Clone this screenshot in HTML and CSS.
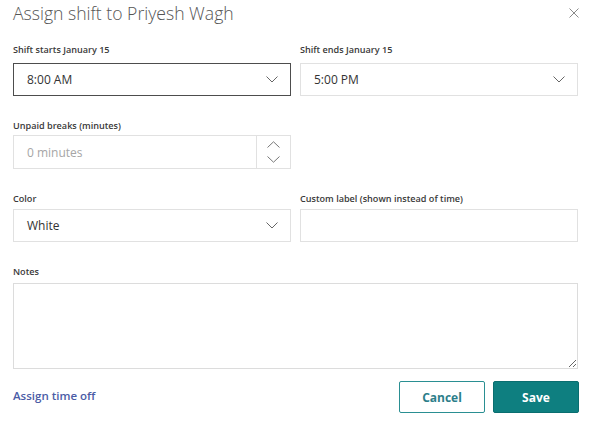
FILE: index.html
```html
<!DOCTYPE html>
<html>
<head>
<meta charset="utf-8">
<link rel="stylesheet" href="styles.css">
</head>
<body>
<div class="dialog">
  <div class="header">
    <h1 class="title">Assign shift to Priyesh Wagh</h1>
    <svg class="close" width="10" height="10" viewBox="0 0 10 10"><path d="M0.5 0.5L9.5 9.5M9.5 0.5L0.5 9.5" stroke="#8a8a8a" stroke-width="1" fill="none"/></svg>
  </div>
  <div class="grid">
    <div class="field">
      <div class="label first">Shift starts January 15</div>
      <div class="box focused"><span class="value">8:00 AM</span><svg class="chev" width="12" height="7" viewBox="0 0 12 7"><path d="M0.5 0.5L6 6L11.5 0.5" stroke="#666" fill="none"/></svg></div>
    </div>
    <div class="field">
      <div class="label first">Shift ends January 15</div>
      <div class="box"><span class="value">5:00 PM</span><svg class="chev" width="12" height="7" viewBox="0 0 12 7"><path d="M0.5 0.5L6 6L11.5 0.5" stroke="#666" fill="none"/></svg></div>
    </div>
    <div class="field">
      <div class="label second">Unpaid breaks (minutes)</div>
      <div class="box spin"><span class="value placeholder">0 minutes</span>
        <div class="spinner">
          <svg width="13" height="7" viewBox="0 0 13 7"><path d="M0.5 6.5L6.5 0.8L12.5 6.5" stroke="#777" fill="none"/></svg>
          <svg width="13" height="7" viewBox="0 0 13 7"><path d="M0.5 0.5L6.5 6.2L12.5 0.5" stroke="#777" fill="none"/></svg>
        </div>
      </div>
    </div>
    <div class="field"></div>
    <div class="field">
      <div class="label">Color</div>
      <div class="box"><span class="value">White</span><svg class="chev" width="12" height="7" viewBox="0 0 12 7"><path d="M0.5 0.5L6 6L11.5 0.5" stroke="#666" fill="none"/></svg></div>
    </div>
    <div class="field">
      <div class="label">Custom label (shown instead of time)</div>
      <div class="box"></div>
    </div>
    <div class="field wide">
      <div class="label notes-label">Notes</div>
      <textarea class="notes"></textarea>
    </div>
  </div>
  <div class="footer">
    <a class="link">Assign time off</a>
    <div class="buttons">
      <button class="btn cancel">Cancel</button>
      <button class="btn save">Save</button>
    </div>
  </div>
</div>
</body>
</html>
```

FILE: styles.css
```css
html, body {
  margin: 0;
  padding: 0;
  background: #fff;
}
body {
  font-family: "Open Sans", "Noto Sans", sans-serif;
  color: #333;
}
.dialog {
  width: 589px;
  height: 421px;
  padding: 0 11px 0 13px;
  box-sizing: border-box;
}
.header {
  display: flex;
  justify-content: space-between;
  align-items: flex-start;
  height: 43px;
}
.title {
  margin: 1px 0 0;
  font-size: 17.6px;
  font-weight: 300;
  color: #555;
  line-height: 24px;
}
.close {
  margin-top: 8px;
  margin-right: -1px;
}
.grid {
  display: grid;
  grid-template-columns: 278px 278px;
  column-gap: 9px;
  row-gap: 23px;
}
.wide {
  grid-column: 1 / 3;
}
.label {
  font-size: 9.1px;
  font-weight: 600;
  color: #3a3a3a;
  line-height: 14px;
  height: 14px;
  margin-bottom: 3px;
}
.label.first {
  margin-bottom: 6px;
}
.label.second {
  margin-bottom: 2px;
}
.label.notes-label {
  margin-bottom: 4px;
}
.box {
  height: 33px;
  border: 1px solid #e1e1e1;
  box-sizing: border-box;
  display: flex;
  align-items: center;
  padding: 0 12px 0 13px;
}
.box.focused {
  border-color: #4d4d4d;
}
.value {
  flex: 1;
  font-size: 12px;
  color: #333;
}
.placeholder {
  color: #a6a6a6;
}
.box.spin {
  height: 34px;
  padding-right: 0;
}
.spinner {
  width: 33px;
  height: 100%;
  border-left: 1px solid #e1e1e1;
  display: flex;
  flex-direction: column;
  align-items: center;
  justify-content: center;
  gap: 8px;
}
.notes {
  display: block;
  width: 100%;
  height: 86px;
  box-sizing: border-box;
  border: 1px solid #dcdcdc;
  margin: 0;
  padding: 6px;
  font-family: inherit;
}
.footer {
  display: flex;
  justify-content: space-between;
  align-items: center;
  margin-top: 12px;
}
.link {
  font-size: 11.5px;
  font-weight: 600;
  color: #4b5ca6;
  margin-top: -4px;
}
.buttons {
  display: flex;
  gap: 8px;
  margin-right: -1px;
}
.btn {
  width: 86px;
  height: 32px;
  font-family: inherit;
  font-size: 12px;
  font-weight: 700;
  border-radius: 2px;
  box-sizing: border-box;
  padding: 0;
}
.cancel {
  background: #fff;
  border: 1px solid #2a8f92;
  color: #2c7e8a;
}
.save {
  background: #0e7f80;
  border: 1px solid #0a6e70;
  color: #fff;
}
```
